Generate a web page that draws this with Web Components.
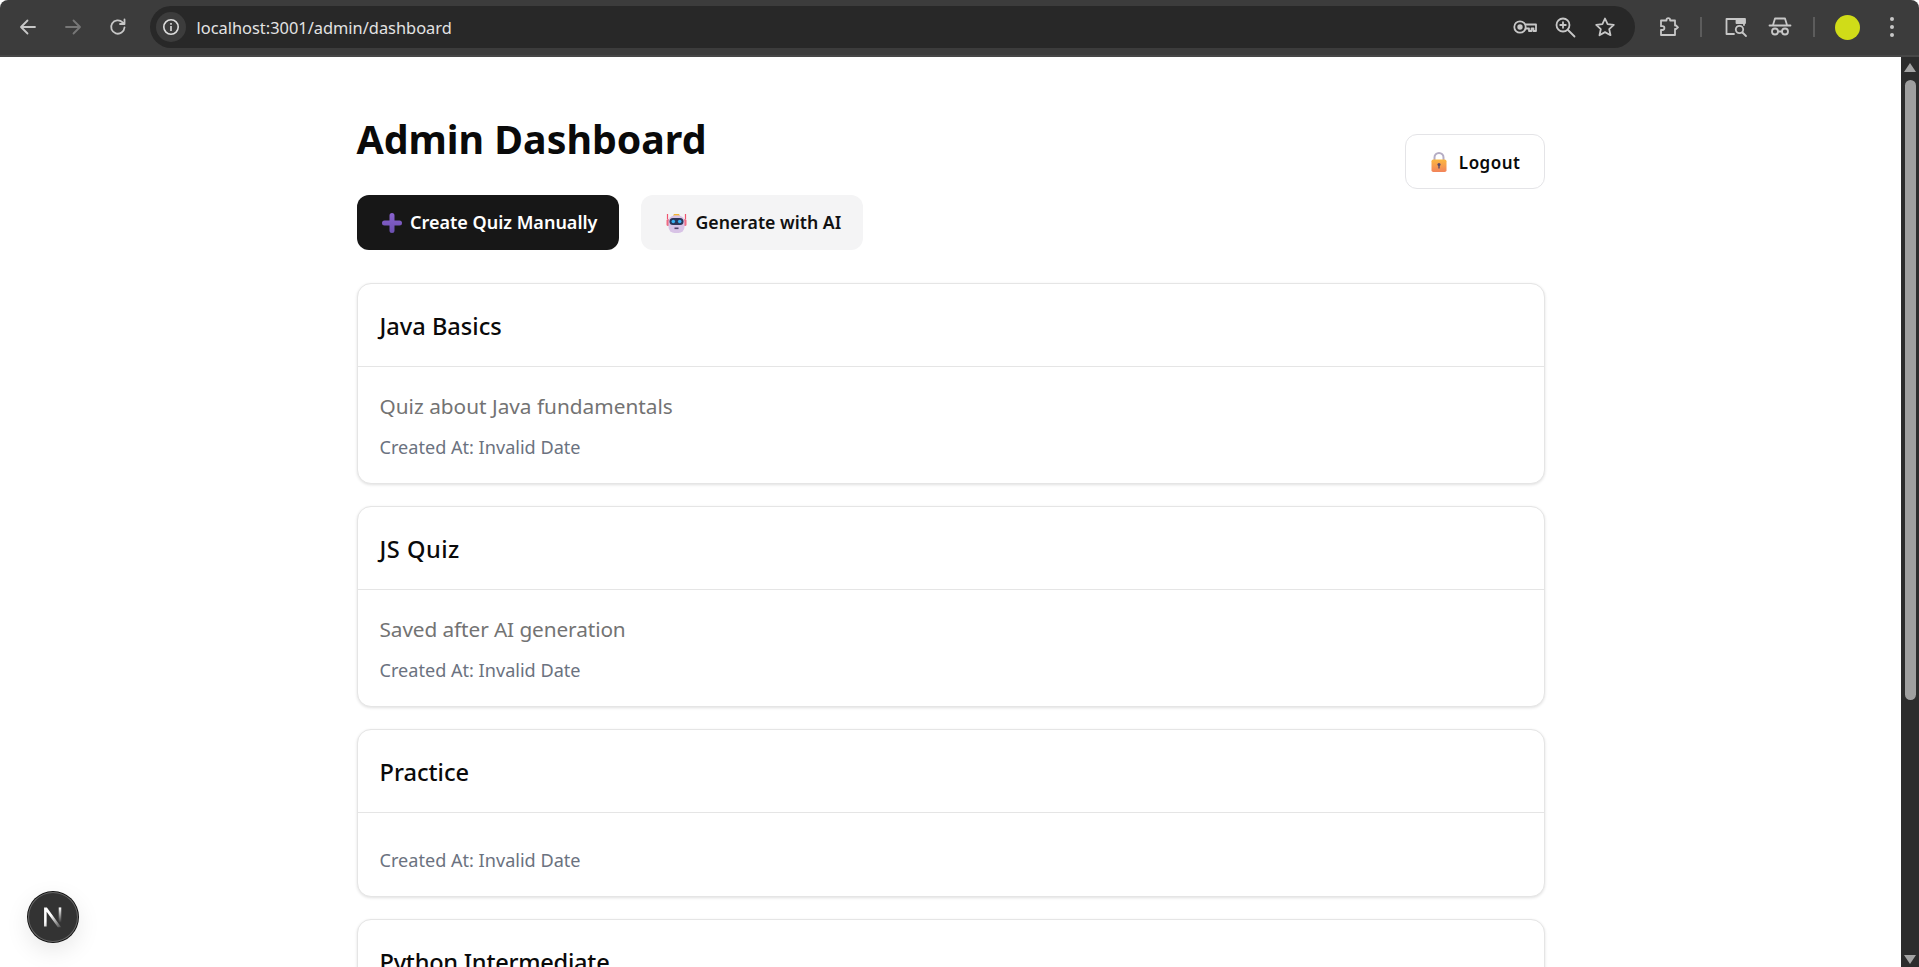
<!DOCTYPE html>
<html lang="en"><head><meta charset="utf-8"><title>Admin Dashboard</title>
<style>
html,body{margin:0;height:100%;overflow:hidden;background:#fff}
body{display:flex;flex-direction:column;height:967px;font-family:"Noto Sans","Open Sans",sans-serif}
</style></head><body>
<browser-bar url="localhost:3001/admin/dashboard"></browser-bar>
<page-frame>
  <dash-header></dash-header>
  <quiz-card title="Java Basics" desc="Quiz about Java fundamentals"></quiz-card>
  <quiz-card title="JS Quiz" desc="Saved after AI generation" style="--tls:.5px;--dls:-.1px"></quiz-card>
  <quiz-card title="Practice"></quiz-card>
  <quiz-card title="Python Intermediate" title-only style="--tls:-.25px"></quiz-card>
</page-frame>
<next-badge></next-badge>
<script>
const s='fill="none" stroke="currentColor" stroke-width="1.8" stroke-linecap="round" stroke-linejoin="round"';
const ICONS={
 back:`<svg width="20" height="20" viewBox="0 0 20 20" ${s}><path d="M17 10H3.500M9.500 3.500 3 10l6.500 6.500"/></svg>`,
 fwd:`<svg width="20" height="20" viewBox="0 0 20 20" ${s}><path d="M3 10h13.500M10.500 3.500 17 10l-6.500 6.500"/></svg>`,
 reload:`<svg width="20" height="20" viewBox="0 0 20 20" ${s}><path d="M16.500 10.500a6.700 6.700 0 1 1-1.900-5.200L16.500 7M16.500 2.500V7H12"/></svg>`,
 info:`<svg width="18" height="18" viewBox="0 0 18 18" fill="none" stroke="currentColor" stroke-width="1.600"><circle cx="9" cy="9" r="7.200"/><path d="M9 8v5M9 5v1.800"/></svg>`,
 key:`<svg width="24" height="20" viewBox="0 0 24 20" ${s}><circle cx="7" cy="10" r="5.700"/><circle cx="7" cy="10" r="1.800" fill="currentColor"/><path d="M12.700 7.500H23v6.500h-2.500v-2.500h-2V14H16v-2.500h-3.300"/></svg>`,
 zoom:`<svg width="22" height="22" viewBox="0 0 22 22" ${s}><circle cx="9" cy="9" r="6.500"/><path d="m14 14 6.500 6.500M9 6.200v5.600M6.200 9h5.600"/></svg>`,
 star:`<svg width="22" height="22" viewBox="0 0 22 22" ${s}><path d="m11 2.500 2.600 5.700 6.200.7-4.600 4.200 1.300 6.100L11 16.100l-5.500 3.100 1.300-6.100-4.600-4.200 6.200-.7z"/></svg>`,
 ext:`<svg width="22" height="22" viewBox="0 0 22 22" ${s}><path d="M3 4.500h5.500V4a1.800 1.800 0 0 1 3.600 0v.5H17v5h1l2 1.800-2 1.700h-1v6H3v-5h1.500a1.900 1.900 0 0 0 0-3.800H3z"/></svg>`,
 tabs:`<svg width="24" height="22" viewBox="0 0 24 22" ${s}><path d="M10 18H2.500V3H20v6"/><path d="M12.500 3H21v4h-8.500z" fill="currentColor"/><circle cx="15.500" cy="13.500" r="3.700"/><path d="m18.500 16.500 3.500 3.500"/></svg>`,
 incog:`<svg width="24" height="22" viewBox="0 0 24 22" ${s}><path d="M1.500 9.500h21M5 9l2-6.500h10L19 9"/><circle cx="7" cy="15.500" r="3"/><circle cx="17" cy="15.500" r="3"/><path d="M10 15.500h4"/></svg>`,
 plus:`<svg width="20" height="20" viewBox="0 0 20 20"><defs><linearGradient id="pg" x1="0" y1="0" x2="0" y2="1"><stop offset="0" stop-color="#8a63cf"/><stop offset="1" stop-color="#6b4fb0"/></linearGradient></defs><path d="M7.500 2.500a2.500 2.500 0 0 1 5 0v5h5a2.500 2.500 0 0 1 0 5h-5v5a2.500 2.500 0 0 1-5 0v-5h-5a2.500 2.500 0 0 1 0-5h5z" fill="url(#pg)"/></svg>`,
 robot:`<svg width="21" height="20" viewBox="0 0 21 20"><path d="M1.500 1v5M19.500 1v5" stroke="#f0536f" stroke-width="1.200"/><rect x=".5" y="6" width="3" height="7" rx="1.500" fill="#ef6a83"/><rect x="17.500" y="6" width="3" height="7" rx="1.500" fill="#ef6a83"/><path d="M7 2.800 8 1h5l1 1.800z" fill="#f5b335"/><rect x="2.500" y="2.500" width="16" height="17.500" rx="6" fill="#d8c3e6"/><rect x="3.500" y="5" width="14" height="7" rx="3.500" fill="#2b3558"/><circle cx="7.300" cy="8.500" r="1.800" fill="#3bb0f2"/><circle cx="13.700" cy="8.500" r="1.800" fill="#3bb0f2"/><rect x="8.500" y="14.500" width="4" height="1.600" fill="#4f4168"/></svg>`,
 lock:`<svg width="18" height="22" viewBox="0 0 18 22"><defs><linearGradient id="lg" x1="0" y1="0" x2="0" y2="1"><stop offset="0" stop-color="#fbb840"/><stop offset="1" stop-color="#f2835a"/></linearGradient></defs><path d="M4.500 10V6.500a4.500 4.500 0 0 1 9 0V10" fill="none" stroke="#b5adc4" stroke-width="2"/><rect x="1.500" y="8.500" width="15" height="12.500" rx="1.800" fill="url(#lg)"/><circle cx="9" cy="13.500" r="1.600" fill="#5a4a68"/><path d="M9 14v3.500" stroke="#5a4a68" stroke-width="1.400"/></svg>`
};
function def(name,css,html){customElements.define(name,class extends HTMLElement{connectedCallback(){if(this.shadowRoot)return;const r=this.attachShadow({mode:'open'});r.innerHTML=`<style>${css}</style>`+(typeof html==='function'?html(this):html);}})}

def('browser-bar',`
:host{display:flex;align-items:center;flex:none;height:57px;box-sizing:border-box;padding-bottom:3px;background:#3c3c3c;box-shadow:inset 0 -2px 0 #474747;border-radius:8px 8px 0 0;color:#c7c7c7;font-family:"Noto Sans",sans-serif}
.i{display:flex;align-items:center;justify-content:center;flex:none}
.nav{width:45px}.nav.off{color:#777}
.pill{flex:none;width:1485px;height:42px;margin-left:10px;background:#282828;border-radius:21px;display:flex;align-items:center;padding:0 10px 0 6px;box-sizing:border-box}
.bub{width:30px;height:30px;border-radius:50%;background:#3c3c3c;display:flex;align-items:center;justify-content:center;color:#ddd;flex:none}
.url{margin-left:10.500px;font-size:16.400px;color:#e3e3e3;flex:1;white-space:nowrap}
.pi{width:40px}
.sep{width:2px;height:20px;background:#5c5c5c;flex:none}
.av{width:25px;height:25px;border-radius:50%;background:#d0dc18;flex:none}
.dots{width:4px;display:flex;flex-direction:column;gap:4px;flex:none}.dots b{width:4px;height:4px;border-radius:50%;background:#c7c7c7}
`,h=>`
<div class="i nav" style="margin-left:5px">${ICONS.back}</div><div class="i nav off">${ICONS.fwd}</div><div class="i nav">${ICONS.reload}</div>
<div class="pill"><div class="bub">${ICONS.info}</div><div class="url">${h.getAttribute('url')}</div>
<div class="i pi">${ICONS.key}</div><div class="i pi">${ICONS.zoom}</div><div class="i pi">${ICONS.star}</div></div>
<div class="i" style="width:22px;margin-left:23px">${ICONS.ext}</div>
<div class="sep" style="margin-left:20px"></div>
<div class="i" style="width:24px;margin-left:22px">${ICONS.tabs}</div>
<div class="i" style="width:24px;margin-left:20px">${ICONS.incog}</div>
<div class="sep" style="margin-left:21px"></div>
<div class="av" style="margin-left:19.500px"></div>
<div class="dots" style="margin-left:30.500px">${'<b></b>'.repeat(3)}</div>`);

def('page-frame',`
:host{display:flex;flex:1;min-height:0;overflow:hidden;background:#fff}
.c{flex:1;min-width:0;overflow:hidden}
.w{width:1188px;margin:0 auto;padding-top:15px;display:flex;flex-direction:column;gap:22px}
.sb{flex:none;width:18px;background:#2c2c2c;display:flex;flex-direction:column;align-items:center;padding:6px 0 3px;box-sizing:border-box}
.th{width:11px;flex:none;height:620px;border-radius:6px;background:#9f9f9f;margin-top:8px;margin-bottom:auto}
.up{width:0;height:0;border:6.500px solid transparent;border-top:0;border-bottom:9px solid #a3a3a3}
.dn{width:0;height:0;border:6.500px solid transparent;border-bottom:0;border-top:9px solid #a3a3a3}
`,`<div class="c"><div class="w"><slot></slot></div></div><div class="sb"><div class="up"></div><div class="th"></div><div class="dn"></div></div>`);

def('dash-header',`
:host{display:flex;justify-content:space-between;align-items:center;margin-bottom:11px;color:#0a0a0a}
h1{margin:40px 0 29px;font-size:39.300px;line-height:54px;font-weight:700;white-space:nowrap}
.btns{display:flex;gap:22px}
.b{display:flex;align-items:center;height:55px;box-sizing:border-box;border-radius:12px;font-weight:600;white-space:nowrap}
.d{background:#171717;color:#fff;padding:0 22px 0 25px;gap:8.500px;font-size:18px}
.l{background:#f4f4f5;color:#111;padding:0 22px 0 25px;gap:8px;font-size:17.700px}
.b.d span,.b.l span{padding-bottom:2px}
.o{background:#fff;border:1px solid #e4e4e7;margin-top:1px;color:#0a0a0a;padding:1px 23px 0 24.500px;gap:10.500px;font-size:17px;letter-spacing:.5px}
`,`<div><h1>Admin Dashboard</h1><div class="btns"><div class="b d">${ICONS.plus}<span>Create Quiz Manually</span></div><div class="b l">${ICONS.robot}<span>Generate with AI</span></div></div></div><div class="b o">${ICONS.lock}<span>Logout</span></div>`);

def('quiz-card',`
:host{display:block;flex:none;border:1px solid #e5e5e5;border-radius:14px;background:#fff;box-shadow:0 1px 3px rgba(0,0,0,.12);color:#0a0a0a}
.h{height:83px;box-sizing:border-box;padding:2px 22px 0;display:flex;align-items:center;border-bottom:1px solid #e5e5e5;font-size:23.600px;font-weight:500;letter-spacing:var(--tls,0)}
.b{padding:25px 22px 23px}
.b.e{padding-top:34px}
p{margin:0 0 14px;font-size:20.800px;line-height:28px;color:#737373;letter-spacing:var(--dls,0)}
.m{font-size:18.100px;line-height:26px;color:#6b7280}
`,h=>{const d=h.getAttribute('desc');const head=`<div class="h"><span>${h.getAttribute('title')}</span></div>`;
 if(h.hasAttribute('title-only'))return head;
 return head+`<div class="b${d?'':' e'}">${d?`<p>${d}</p>`:''}<div class="m">Created At: Invalid Date</div></div>`});

def('next-badge',`
:host{position:fixed;left:28px;bottom:25px;width:50px;height:50px;border-radius:50%;background:#333;box-shadow:0 0 0 1px #111,inset 0 0 0 1px #666,0 8px 24px rgba(0,0,0,.1);display:flex;align-items:center;justify-content:center}
`,`<svg width="28" height="28" viewBox="0 0 22 22"><defs><linearGradient id="ng" x1="0" y1="0" x2="1" y2="1"><stop offset=".4" stop-color="#fff"/><stop offset="1" stop-color="#fff" stop-opacity=".1"/></linearGradient><linearGradient id="ng2" x1="0" y1="0" x2="0" y2="1"><stop offset="0" stop-color="#fff"/><stop offset="1" stop-color="#fff" stop-opacity="0"/></linearGradient></defs><path d="M4 3.500h2.200L17.500 19h-2.700L6 6.800V18.500H4z" fill="url(#ng)"/><rect x="15.500" y="3.500" width="2" height="12" fill="url(#ng2)"/></svg>`);
</script>
</body></html>
